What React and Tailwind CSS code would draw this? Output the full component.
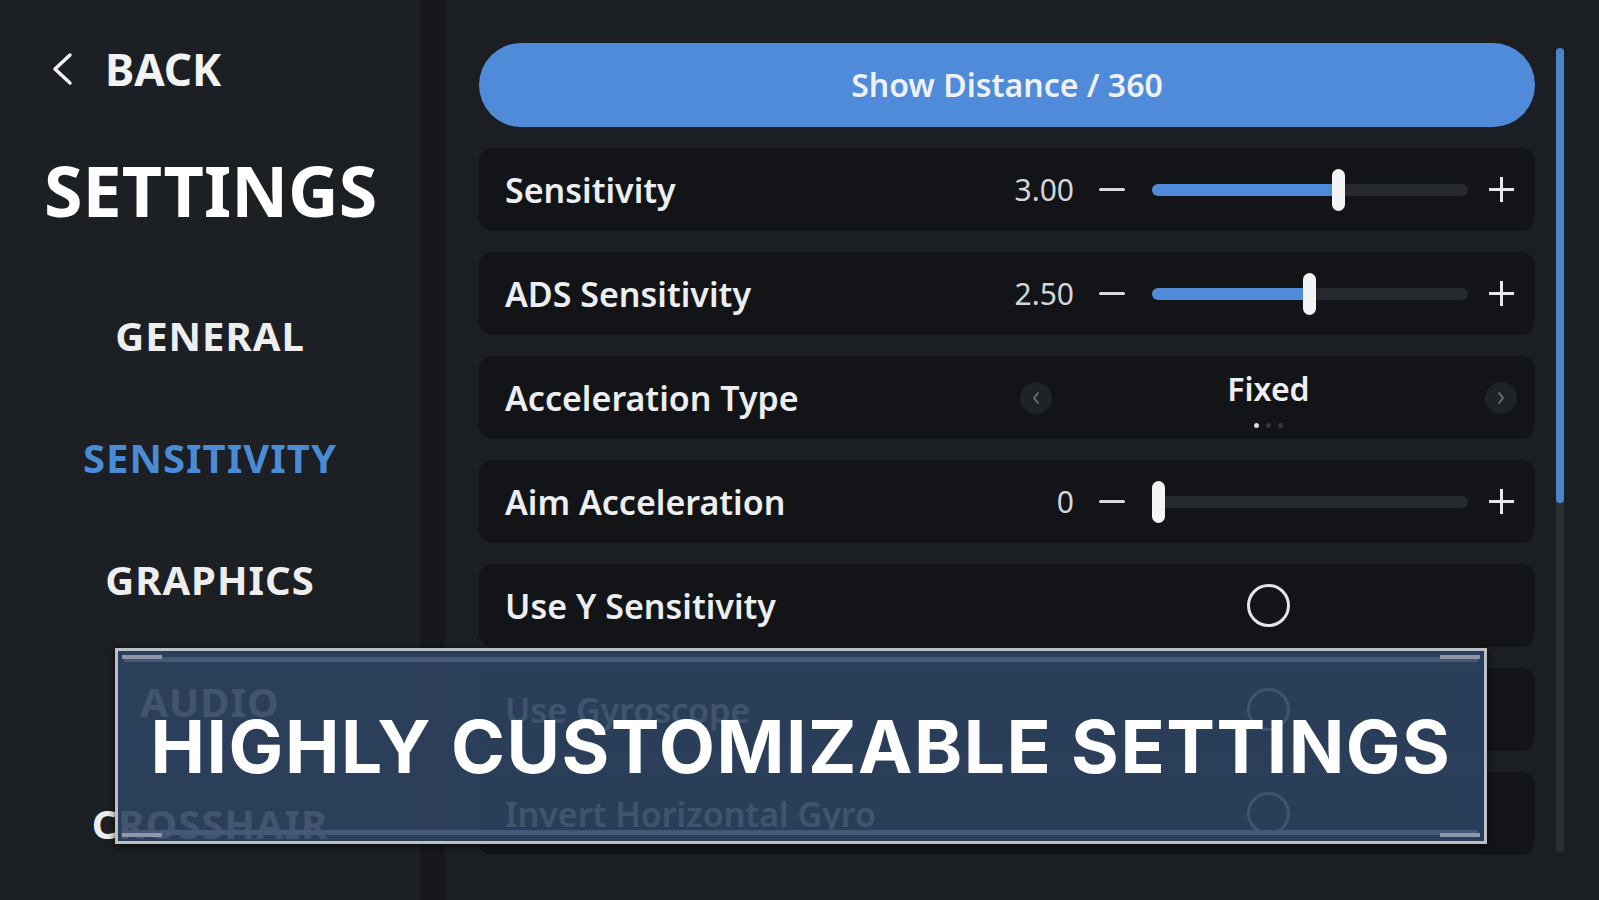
import React from 'react';

const rows = [
  { label: 'Sensitivity', type: 'slider', value: '3.00', pct: 0.59 },
  { label: 'ADS Sensitivity', type: 'slider', value: '2.50', pct: 0.497 },
  { label: 'Acceleration Type', type: 'select', value: 'Fixed' },
  { label: 'Aim Acceleration', type: 'slider', value: '0', pct: 0 },
  { label: 'Use Y Sensitivity', type: 'toggle' },
  { label: 'Use Gyroscope', type: 'toggle' },
  { label: 'Invert Horizontal Gyro', type: 'toggle' },
];

const navItems = ['GENERAL', 'SENSITIVITY', 'GRAPHICS', 'AUDIO', 'CROSSHAIR'];

function Slider({ value, pct }) {
  const trackW = 316;
  const thumbLeft = Math.max(0, pct * trackW - 6.5);
  return (
    <div className="flex items-center">
      <span className="w-[80px] text-right text-[30px] leading-none text-[#d3d5d8]">{value}</span>
      <span className="ml-[25px] h-[3px] w-[26px] rounded-full bg-[#d9dadc]" />
      <div className="relative ml-[27px] h-[12px] w-[316px] rounded-full bg-[#25282c]">
        <div className="absolute left-0 top-0 h-full rounded-full bg-[#4f8bd8]" style={{ width: pct * trackW }} />
        <div
          className="absolute top-1/2 h-[42px] w-[13px] -translate-y-1/2 rounded-full bg-[#f4f4f4]"
          style={{ left: thumbLeft }}
        />
      </div>
      <span className="relative ml-[21px] h-[25px] w-[25px]">
        <span className="absolute left-0 top-[11px] h-[3px] w-[25px] bg-[#e8e8e8]" />
        <span className="absolute left-[11px] top-0 h-[25px] w-[3px] bg-[#e8e8e8]" />
      </span>
    </div>
  );
}

function ArrowButton({ dir }) {
  return (
    <span className="flex h-[32px] w-[32px] items-center justify-center rounded-full bg-[#1f2226]">
      <svg width="10" height="14" viewBox="0 0 10 14" fill="none">
        <path
          d={dir === 'left' ? 'M7 2 L3 7 L7 12' : 'M3 2 L7 7 L3 12'}
          stroke="#6a6e74"
          strokeWidth="2"
          strokeLinecap="round"
          strokeLinejoin="round"
        />
      </svg>
    </span>
  );
}

function Select({ value }) {
  return (
    <div className="-mr-[3px] flex w-[497px] items-center justify-between">
      <ArrowButton dir="left" />
      <div className="mt-[6px] flex flex-col items-center">
        <span className="text-[32px] font-semibold leading-none text-[#eeeff0]">{value}</span>
        <div className="mt-[18px] flex gap-[7px]">
          <span className="h-[5px] w-[5px] rounded-full bg-[#d8d9da]" />
          <span className="h-[5px] w-[5px] rounded-full bg-[#34373c]" />
          <span className="h-[5px] w-[5px] rounded-full bg-[#34373c]" />
        </div>
      </div>
      <ArrowButton dir="right" />
    </div>
  );
}

function Toggle() {
  return (
    <div className="-mr-[3px] flex w-[497px] justify-center">
      <span className="h-[43px] w-[43px] rounded-full border-[3px] border-[#e4e5e6]" />
    </div>
  );
}

function SettingRow({ row }) {
  return (
    <div className="flex h-[83px] items-center justify-between rounded-[14px] bg-[#121418] pl-[26px] pr-[21px]">
      <span className="text-[34px] font-semibold leading-none text-[#eceef0]">{row.label}</span>
      {row.type === 'slider' && <Slider value={row.value} pct={row.pct} />}
      {row.type === 'select' && <Select value={row.value} />}
      {row.type === 'toggle' && <Toggle />}
    </div>
  );
}

export default function App() {
  return (
    <div className="relative flex h-[900px] w-full overflow-hidden bg-[#1b1e22] font-['Noto_Sans','DejaVu_Sans',sans-serif]">
      {/* sidebar */}
      <aside className="flex w-[420px] shrink-0 flex-col bg-[#1c1f23]">
        <div className="flex items-center pl-[50px] pt-[47px]">
          <svg width="24" height="34" viewBox="0 0 24 34" fill="none">
            <path d="M20 3 L5 17 L20 31" stroke="#f2f2f2" strokeWidth="3.5" strokeLinecap="round" strokeLinejoin="round" />
          </svg>
          <span className="ml-[31px] text-[44px] font-bold leading-none text-[#f3f3f3]">BACK</span>
        </div>
        <h1 className="mt-[64px] pl-[44px] text-[70px] font-bold leading-none text-white">SETTINGS</h1>
        <nav className="mt-[91px] flex flex-col items-center gap-[82px]">
          {navItems.map((item) => (
            <span
              key={item}
              className={
                item === 'SENSITIVITY'
                  ? 'text-[40px] font-bold leading-none tracking-[1px] text-[#4a8bd6]'
                  : 'text-[40px] font-bold leading-none tracking-[1px] text-[#eeeeee]'
              }
            >
              {item}
            </span>
          ))}
        </nav>
      </aside>

      {/* shadow strip */}
      <div className="w-[25px] shrink-0 bg-[#16181b]" />

      {/* main */}
      <main className="flex flex-1 pl-[34px] pt-[43px]">
        <div className="flex w-[1056px] flex-col gap-[21px]">
          <button className="flex h-[84px] items-center justify-center rounded-full bg-[#4f8bd8] text-[32px] font-semibold leading-none text-[#eef2f8]">
            Show Distance / 360
          </button>
          {rows.map((row) => (
            <SettingRow key={row.label} row={row} />
          ))}
        </div>
        <div className="ml-[21px] pt-[5px]">
          <div className="h-[804px] w-[8px] rounded-full bg-[#2c2f34]">
            <div className="h-[455px] w-[8px] rounded-full bg-[#4a85cc]" />
          </div>
        </div>
      </main>

      {/* banner overlay */}
      <div className="absolute left-[115px] top-[648px] flex h-[196px] w-[1372px] items-center justify-center border-[3px] border-[#bcc0c5] bg-[rgba(47,66,96,0.9)] shadow-[0_2px_8px_rgba(0,0,0,0.6)]">
        <div className="absolute inset-x-[6px] top-[6px] h-[5px] bg-[#45587a]" />
        <div className="absolute inset-x-[6px] bottom-[6px] h-[5px] bg-[#45587a]" />
        <div className="absolute left-[4px] top-[4px] h-[4px] w-[40px] bg-[#8e98a6]" />
        <div className="absolute right-[4px] top-[4px] h-[4px] w-[40px] bg-[#8e98a6]" />
        <div className="absolute left-[4px] bottom-[4px] h-[4px] w-[40px] bg-[#8e98a6]" />
        <div className="absolute right-[4px] bottom-[4px] h-[4px] w-[40px] bg-[#8e98a6]" />
        <span className="relative font-['Inter','Noto_Sans',sans-serif] text-[73px] font-bold leading-none tracking-[1.5px] text-white">
          HIGHLY CUSTOMIZABLE SETTINGS
        </span>
      </div>
    </div>
  );
}
